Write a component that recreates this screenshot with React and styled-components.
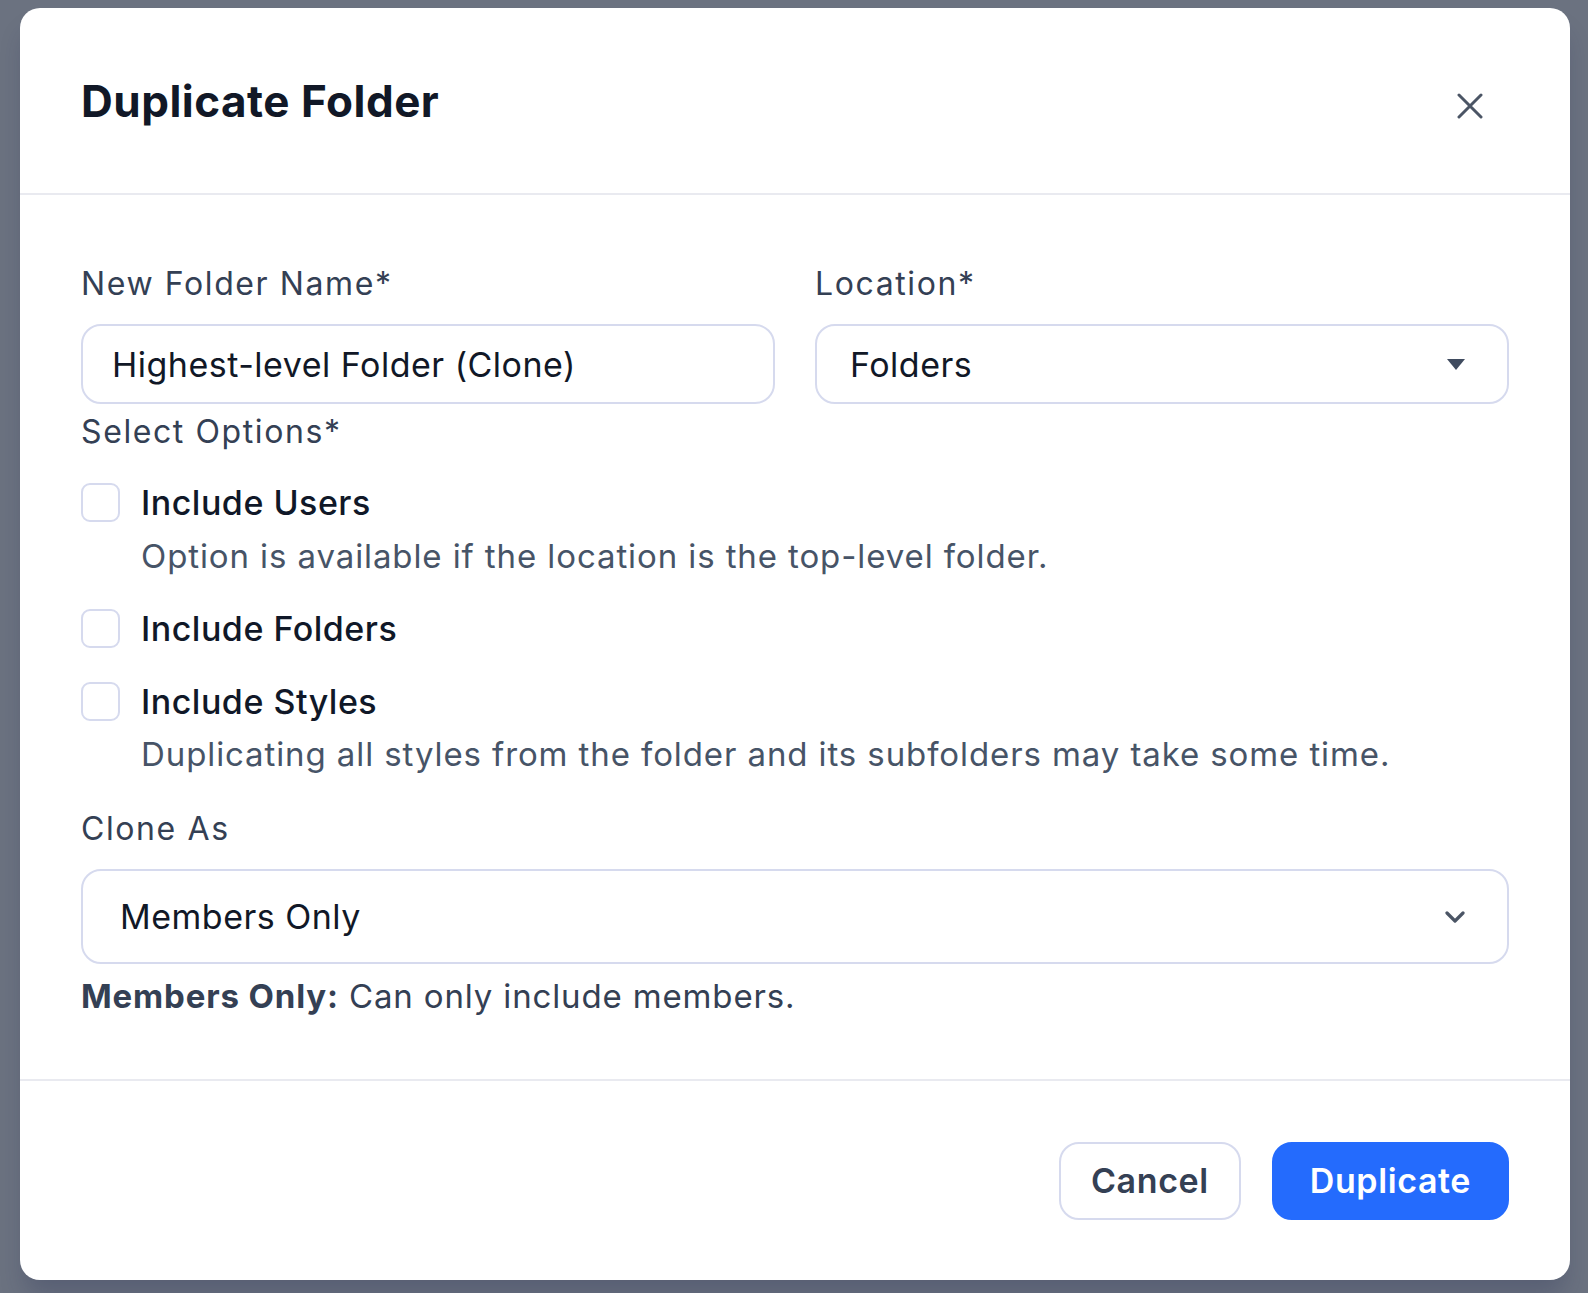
import React from "react";
import styled, { createGlobalStyle } from "styled-components";

const GlobalStyle = createGlobalStyle`
  * { box-sizing: border-box; }
  html, body {
    margin: 0;
    padding: 0;
    background: #6b7280;
    font-family: Inter, "Noto Sans", "Liberation Sans", sans-serif;
  }
`;

const Backdrop = styled.div`
  width: 1588px;
  height: 1293px;
  padding: 8px 18px 13px 20px;
  background: #6b7280;
`;

const Modal = styled.div`
  width: 1550px;
  height: 1272px;
  background: #ffffff;
  border-radius: 20px;
  display: flex;
  flex-direction: column;
  box-shadow: 0 20px 25px -5px rgba(30, 41, 80, 0.25);
`;

const Header = styled.div`
  height: 187px;
  padding: 0 87px 0 61px;
  display: flex;
  align-items: center;
  justify-content: space-between;
  border-bottom: 2px solid #e9eaf0;
  h1 {
    margin: 0;
    font-size: 44px;
    font-weight: 700;
    color: #111827;
    letter-spacing: 0.5px;
  }
`;

const CloseButton = styled.button`
  border: none;
  background: none;
  padding: 0;
  width: 26px;
  height: 26px;
  display: flex;
  cursor: pointer;
  margin-top: 10px;
`;

const Body = styled.div`
  flex: 1;
  padding: 69px 61px 0 61px;
  display: flex;
  flex-direction: column;
`;

const Columns = styled.div`
  display: grid;
  grid-template-columns: 1fr 1fr;
  gap: 40px;
`;

const Field = styled.div`
  display: flex;
  flex-direction: column;
`;

const Label = styled.div`
  font-size: 32px;
  line-height: 40px;
  letter-spacing: 1.6px;
  color: #344054;
  margin-top: ${(p) => p.$top || 0}px;
`;

const Box = styled.div`
  height: ${(p) => p.$h || 80}px;
  margin-top: ${(p) => p.$gap || 20}px;
  border: 2px solid #d6daee;
  border-radius: 20px;
  display: flex;
  align-items: center;
  justify-content: space-between;
  padding: 0 42px 0 ${(p) => p.$pl || 29}px;
  font-size: 34px;
  letter-spacing: 0.5px;
  color: #111827;
`;

const OptionRow = styled.label`
  display: flex;
  align-items: center;
  gap: 21px;
  height: 44px;
  margin-top: ${(p) => p.$top}px;
  cursor: pointer;
`;

const CheckBox = styled.span`
  width: 39px;
  height: 39px;
  border: 2px solid #d6daee;
  border-radius: 9px;
  background: #fff;
  flex-shrink: 0;
`;

const OptionText = styled.span`
  font-size: 34px;
  font-weight: 500;
  letter-spacing: 0.5px;
  color: #101828;
`;

const Hint = styled.div`
  margin: ${(p) => p.$top}px 0 0 60px;
  font-size: 33px;
  line-height: 44px;
  letter-spacing: 0.9px;
  color: #475467;
`;

const Note = styled.div`
  margin-top: 10px;
  font-size: 33px;
  line-height: 44px;
  letter-spacing: 0.85px;
  color: #344054;
  b { font-weight: 700; }
`;

const Footer = styled.div`
  height: 201px;
  border-top: 2px solid #e9eaf0;
  padding: 0 61px;
  display: flex;
  align-items: center;
  justify-content: flex-end;
  gap: 31px;
`;

const Button = styled.button`
  height: 78px;
  padding: 0 ${(p) => (p.$primary ? 36 : 30)}px;
  border-radius: 20px;
  font-family: inherit;
  font-size: 34px;
  font-weight: 600;
  letter-spacing: 0.6px;
  border: 2px solid ${(p) => (p.$primary ? "#246bfd" : "#d6daee")};
  background: ${(p) => (p.$primary ? "#246bfd" : "#ffffff")};
  color: ${(p) => (p.$primary ? "#ffffff" : "#344054")};
  cursor: pointer;
`;

const Caret = () => (
  <svg width="18" height="11" viewBox="0 0 18 11">
    <path d="M0 0 H18 L9 11 Z" fill="#3f4b5f" />
  </svg>
);

const Chevron = () => (
  <svg width="20" height="12" viewBox="0 0 20 12">
    <path d="M2 2 L10 10 L18 2" fill="none" stroke="#4b5565" strokeWidth="3.2" strokeLinecap="round" strokeLinejoin="round" />
  </svg>
);

const options = [
  { label: "Include Users", hint: "Option is available if the location is the top-level folder.", top: 28 },
  { label: "Include Folders", top: 28 },
  { label: "Include Styles", hint: "Duplicating all styles from the folder and its subfolders may take some time.", top: 29 },
];

export default function App() {
  return (
    <>
      <GlobalStyle />
      <Backdrop>
        <Modal>
          <Header>
            <h1>Duplicate Folder</h1>
            <CloseButton aria-label="Close">
              <svg width="26" height="26" viewBox="0 0 26 26">
                <path d="M2 2 L24 24 M24 2 L2 24" stroke="#4b5565" strokeWidth="3" strokeLinecap="round" />
              </svg>
            </CloseButton>
          </Header>
          <Body>
            <Columns>
              <Field>
                <Label>New Folder Name*</Label>
                <Box>Highest-level Folder (Clone)</Box>
              </Field>
              <Field>
                <Label>Location*</Label>
                <Box $pl={33}>
                  Folders
                  <Caret />
                </Box>
              </Field>
            </Columns>
            <Label $top={8}>Select Options*</Label>
            {options.map((o, i) => (
              <React.Fragment key={o.label}>
                <OptionRow $top={o.top}>
                  <CheckBox />
                  <OptionText>{o.label}</OptionText>
                </OptionRow>
                {o.hint && <Hint $top={i === 0 ? 10 : 9}>{o.hint}</Hint>}
              </React.Fragment>
            ))}
            <Label $top={33}>Clone As</Label>
            <Box $h={95} $gap={20} $pl={37}>
              Members Only
              <Chevron />
            </Box>
            <Note>
              <b>Members Only:</b> Can only include members.
            </Note>
          </Body>
          <Footer>
            <Button>Cancel</Button>
            <Button $primary>Duplicate</Button>
          </Footer>
        </Modal>
      </Backdrop>
    </>
  );
}
